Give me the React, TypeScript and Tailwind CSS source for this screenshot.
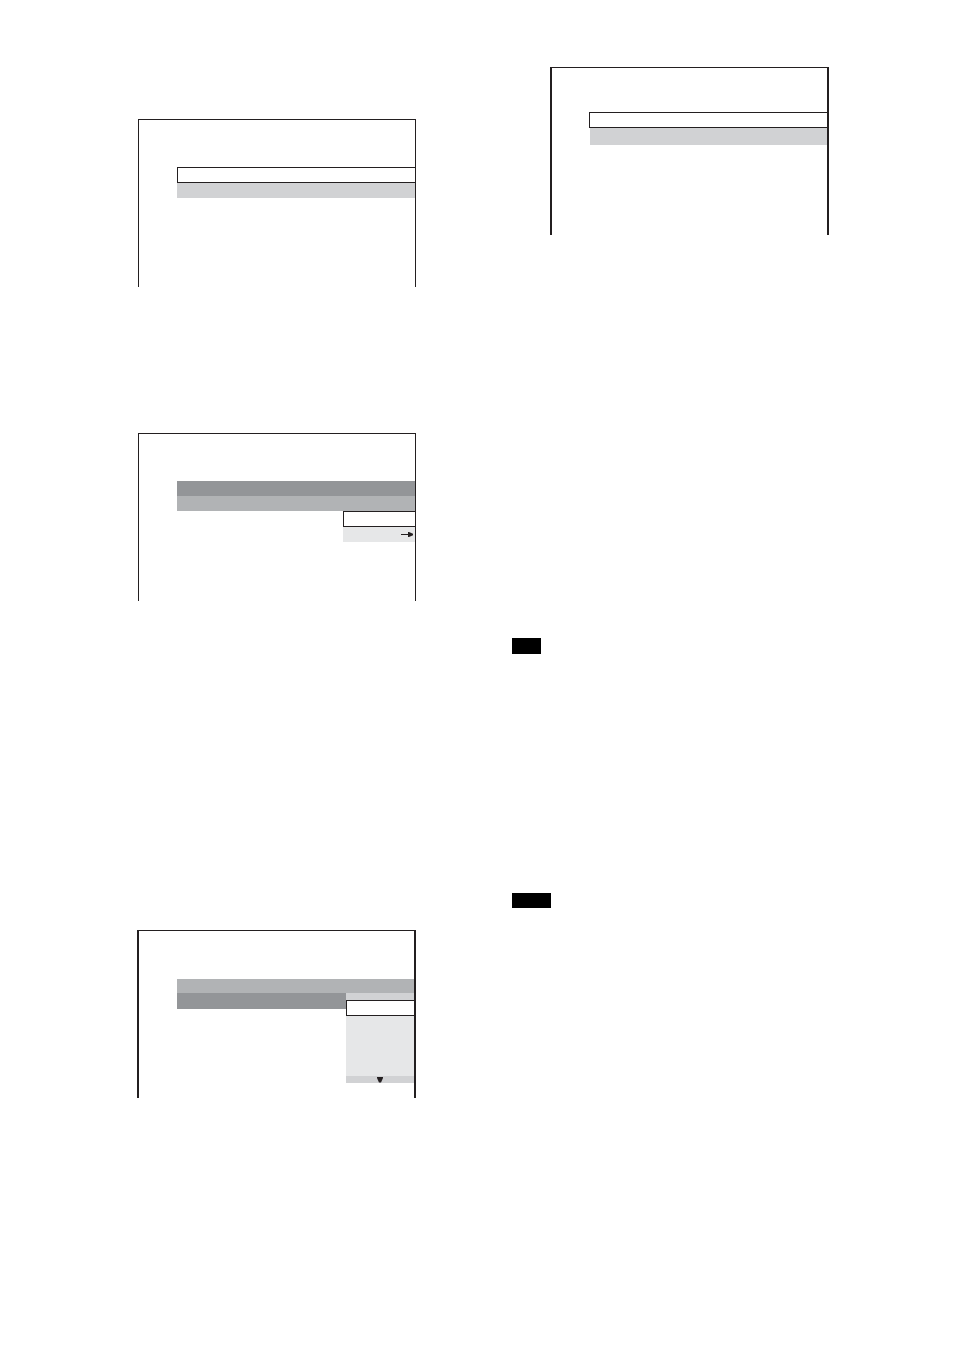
import type { ReactNode } from "react";
import clsx from "clsx";

type ScreenProps = {
  children: ReactNode;
  className?: string;
};

// TV screen outline, open at the bottom
function Screen({ children, className }: ScreenProps) {
  return (
    <section className={clsx("h-[168px] border-t border-[#231f20]", className)}>
      {children}
    </section>
  );
}

function Arrow() {
  return (
    <svg width="12" height="5" viewBox="0 0 12 5" fill="#231f20">
      <rect x="0" y="2" width="8" height="1" />
      <path d="M7 0 H8 L12.5 2 V3 L8 5 H7 Z" />
    </svg>
  );
}

function DownArrow() {
  return (
    <svg width="6" height="7" viewBox="0 0 6 7" fill="#231f20">
      <path d="M0 1 H6 V2 L4 6.5 H2 L0 2 Z" />
    </svg>
  );
}

export default function App() {
  return (
    <main className="grid min-h-screen grid-cols-[279fr_317fr] gap-24 bg-white pr-[125px] pl-[137px]">
      <div className="pt-[119px]">
        <Screen className="ml-px border-x pt-[47px] pl-[38px]">
          <ul>
            <li className="h-4 border-y border-l border-[#231f20]" />
            <li className="h-[15px] bg-[#d1d2d4]" />
          </ul>
        </Screen>

        <Screen className="mt-[146px] ml-px border-x pt-[47px] pl-[38px]">
          <ul>
            <li className="h-[15px] bg-[#939598]" />
            <li className="h-[15px] bg-[#b1b3b5]" />
          </ul>
          <ul className="ml-auto w-[72px]">
            <li className="h-4 border-y border-l border-[#231f20]" />
            <li className="flex h-[15px] items-center justify-end bg-[#e6e7e8] pr-0.5">
              <Arrow />
            </li>
          </ul>
        </Screen>

        <Screen className="mt-[329px] border-x-2 pt-12 pl-[38px]">
          <div className="h-3.5 bg-[#b1b3b5]" />
          <div className="flex items-start">
            <div className="h-4 flex-1 bg-[#939598]" />
            <ul className="w-[68px]">
              <li className="h-[7px] bg-[#d1d2d4]" />
              <li className="h-4 border-y border-l border-[#231f20]" />
              <li className="h-[60px] bg-[#e6e7e8]" />
              <li className="flex h-[7px] items-center justify-center bg-[#d1d2d4]">
                <DownArrow />
              </li>
            </ul>
          </div>
        </Screen>
      </div>

      <div className="pt-[67px]">
        <Screen className="ml-[38px] border-x-2 pt-11 pl-[37px]">
          <ul>
            <li className="h-4 border-y border-l border-[#231f20]" />
            <li className="ml-px h-[17px] bg-[#d1d2d4]" />
          </ul>
        </Screen>
        <div className="mt-[403px] h-4 w-[29px] bg-black" />
        <div className="mt-[239px] h-[15px] w-[39px] bg-black" />
      </div>
    </main>
  );
}
